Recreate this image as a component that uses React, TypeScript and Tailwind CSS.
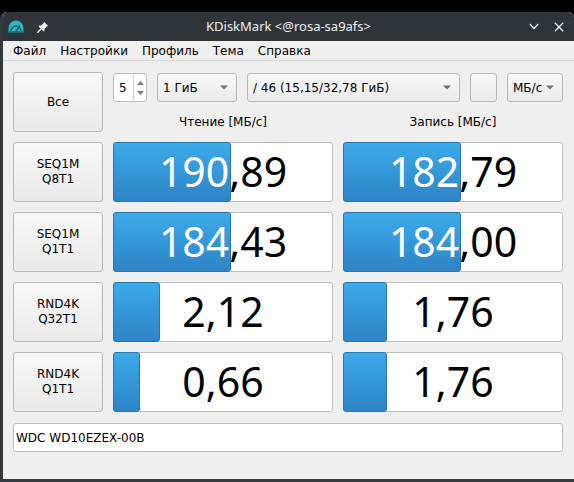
import React from "react";

const btn =
  "border border-[#b8b8b8] rounded-[3px] bg-linear-to-b from-[#f8f8f8] to-[#eaeaea]";

function Arrow() {
  return (
    <svg width="8" height="5" viewBox="0 0 8 5" className="shrink-0">
      <path d="M0 0.5 L8 0.5 L4 4.5 Z" fill="#6f7275" />
    </svg>
  );
}

function Combo({ text, w }: { text: string; w: string }) {
  return (
    <div className={`${btn} ${w} h-[29px] flex items-center justify-between pl-[5px] pr-[8px]`}>
      <span className="whitespace-nowrap">{text}</span>
      <Arrow />
    </div>
  );
}

function Bar({ value, fill }: { value: string; fill: number }) {
  return (
    <div className="relative h-[60px] bg-white border border-[#bcbcbc] rounded-[3px]">
      <div className="h-full flex items-center justify-center text-[41px] font-['Noto_Sans',sans-serif] text-black whitespace-nowrap">
        {value}
      </div>
      <div
        className="absolute left-[-1px] top-[-1px] bottom-[-1px] overflow-hidden rounded-[3px] border border-[#2878ae] bg-linear-to-b from-[#3caaea] to-[#2d84c6]"
        style={{ width: fill }}
      >
        <div className="w-[218px] h-full flex items-center justify-center text-[41px] font-['Noto_Sans',sans-serif] text-white whitespace-nowrap">
          {value}
        </div>
      </div>
    </div>
  );
}

function Row({ a, b, r, rf, w, wf }: { a: string; b: string; r: string; rf: number; w: string; wf: number }) {
  return (
    <div className="mt-[10px] grid grid-cols-[90px_220px_220px] gap-[10px]">
      <div className={`${btn} h-[60px] flex flex-col items-center justify-center leading-[15px]`}>
        <span>{a}</span>
        <span>{b}</span>
      </div>
      <Bar value={r} fill={rf} />
      <Bar value={w} fill={wf} />
    </div>
  );
}

export default function App() {
  return (
    <div className="w-[574px] h-[482px] bg-black pt-[12px] overflow-hidden font-['DejaVu_Sans',sans-serif] text-[12px] text-black">
      <div className="h-[470px] flex flex-col rounded-t-[6px] overflow-hidden bg-[#efefef] border-l-[3px] border-b-[3px] border-[#33383d]">
        {/* title bar */}
        <div className="h-[29px] shrink-0 bg-[#2f3439] flex items-center">
          <div className="w-[60px] flex items-center gap-[13px] pl-[5px]">
            <svg width="16" height="13" viewBox="0 0 16 13">
              <path d="M0.5 12.5 L0.5 8 A7.5 7.5 0 0 1 15.5 8 L15.5 12.5 Z" fill="#2fb4c8" />
              <path d="M3 11 A5 5 0 0 1 13 11" fill="none" stroke="#16616d" strokeWidth="1.4" />
              <path d="M8 11.5 L11.5 6" stroke="#16616d" strokeWidth="1.6" strokeLinecap="round" />
              <rect x="0.5" y="11.4" width="15" height="1.1" fill="#16616d" />
            </svg>
            <svg width="12" height="12" viewBox="0 0 12 12">
              <path d="M7 0.8 L11.2 5 L9.8 5.6 L7.6 7.8 L7.4 10 L6.6 10.4 L1.6 5.4 L2 4.6 L4.2 4.4 L6.4 2.2 Z" fill="#f2f2f2" />
              <path d="M4 8 L0.8 11.2" stroke="#f2f2f2" strokeWidth="1.4" strokeLinecap="round" />
            </svg>
          </div>
          <div className="flex-1 text-center text-[#eff0f1] text-[13px] font-['Noto_Sans',sans-serif] whitespace-nowrap">
            KDiskMark &lt;@rosa-sa9afs&gt;
          </div>
          <div className="w-[60px] flex items-center justify-end gap-[15px] pr-[10px]">
            <svg width="10" height="7" viewBox="0 0 10 7">
              <path d="M0.8 1 L5 5.5 L9.2 1" fill="none" stroke="#eff0f1" strokeWidth="1.3" />
            </svg>
            <svg width="10" height="10" viewBox="0 0 10 10">
              <path d="M0.8 0.8 L9.2 9.2 M9.2 0.8 L0.8 9.2" fill="none" stroke="#eff0f1" strokeWidth="1.3" />
            </svg>
          </div>
        </div>
        {/* menu bar */}
        <div className="h-[20px] shrink-0 flex items-center pl-[3px] border-b border-[#d6d6d6] text-[12px]">
          {["Файл", "Настройки", "Профиль", "Тема", "Справка"].map((m) => (
            <span key={m} className="px-[7px]">{m}</span>
          ))}
        </div>
        {/* content */}
        <div className="flex-1 pt-[11px] pl-[10px] pr-[11px]">
          <div className="flex gap-[10px]">
            <div className={`${btn} w-[90px] h-[60px] flex items-center justify-center`}>Все</div>
            <div className="w-[450px]">
              <div className="mt-[1px] flex gap-[10px]">
                <div className="w-[34px] h-[29px] flex bg-white border border-[#bcbcbc] rounded-[3px]">
                  <div className="flex-1 flex items-center pl-[5px]">5</div>
                  <div className="w-[13px] border-l border-[#d4d4d4] flex flex-col items-center justify-center gap-[6px]">
                    <svg width="7" height="4" viewBox="0 0 7 4"><path d="M0 4 L7 4 L3.5 0 Z" fill="#7a7d80" /></svg>
                    <svg width="7" height="4" viewBox="0 0 7 4"><path d="M0 0 L7 0 L3.5 4 Z" fill="#7a7d80" /></svg>
                  </div>
                </div>
                <Combo text="1 ГиБ" w="w-[80px]" />
                <Combo text="/ 46 (15,15/32,78 ГиБ)" w="w-[213px]" />
                <div className={`${btn} w-[27px] h-[29px]`} />
                <Combo text="МБ/с" w="w-[56px]" />
              </div>
              <div className="mt-[13px] grid grid-cols-[220px_220px] gap-[10px] leading-[14px]">
                <div className="text-center">Чтение [МБ/с]</div>
                <div className="text-center">Запись [МБ/с]</div>
              </div>
            </div>
          </div>
          <Row a="SEQ1M" b="Q8T1" r="190,89" rf={118} w="182,79" wf={118} />
          <Row a="SEQ1M" b="Q1T1" r="184,43" rf={118} w="184,00" wf={118} />
          <Row a="RND4K" b="Q32T1" r="2,12" rf={47} w="1,76" wf={44} />
          <Row a="RND4K" b="Q1T1" r="0,66" rf={27} w="1,76" wf={44} />
          <div className="mt-[11px] h-[29px] bg-white border border-[#bcbcbc] rounded-[3px] flex items-center pl-[2px]">
            WDC WD10EZEX-00B
          </div>
        </div>
      </div>
    </div>
  );
}
